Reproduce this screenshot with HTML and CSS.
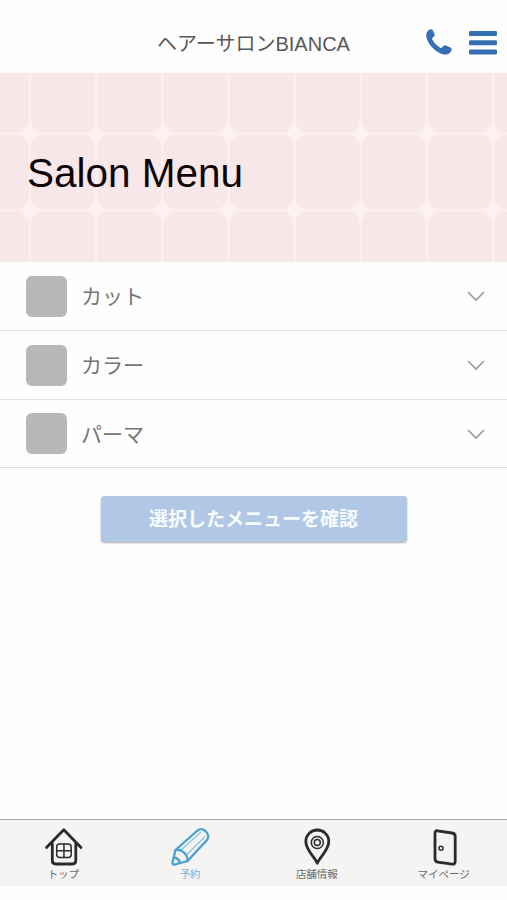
FILE: index.html
```html
<!DOCTYPE html>
<html lang="ja">
<head>
<meta charset="utf-8">
<meta name="viewport" content="width=device-width, initial-scale=1">
<title>ヘアーサロンBIANCA</title>
<link rel="stylesheet" href="styles.css">
</head>
<body>
<div class="app">
  <header class="header">
    <span class="header-title">ヘアーサロンBIANCA</span>
    <div class="header-actions">
      <svg class="phone" width="28" height="28" viewBox="0 0 28 28"><path d="M2.300 5.800C3.200 3.200 5.200 1.200 7.300 1.300c1 .1 1.400.8 1.900 1.800l1.300 3c.5 1.100.2 1.800-.6 2.500L8.300 10.100c-.4.4-.3.8 0 1.300 1.900 3.500 4.500 6.200 8 8.300.7.4 1.100.4 1.600-.1l1.500-1.700c.7-.7 1.400-.9 2.300-.5l4.700 2.200c1.300.6 1.500 1.200 1.200 2.400-.7 2.500-3 4.500-6 4.600C13.500 26.700 1.100 15 2.300 5.800z"/></svg>
      <svg class="burger" width="28" height="26" viewBox="0 0 28 26"><rect y="1" width="28" height="5" rx="1.200"/><rect y="10.200" width="28" height="5" rx="1.200"/><rect y="19.500" width="28" height="5" rx="1.200"/></svg>
    </div>
  </header>
  <section class="hero">
    <svg class="hero-pattern" width="507" height="189">
      <defs>
        <pattern id="tile" x="-3.200" y="22.500" width="66.200" height="76.300" patternUnits="userSpaceOnUse">
          <path class="tile-line" d="M33.100 0V76.300M0 38.150H66.200"/>
          <path class="tile-diamond" d="M33.100 27.600q4 6.500 10 10.550q-6 4.500-10 10.800q-4-6.300-10-10.800q6-4.050 10-10.550z"/>
        </pattern>
      </defs>
      <rect width="507" height="189" fill="url(#tile)"/>
    </svg>
    <h1 class="hero-title">Salon Menu</h1>
  </section>
  <main class="main">
    <ul class="menu">
      <li class="menu-item"><span class="thumb"></span><span class="menu-name">カット</span><svg class="chevron" width="18" height="11" viewBox="0 0 18 11"><path d="M1 1l8 8 8-8"/></svg></li>
      <li class="menu-item"><span class="thumb"></span><span class="menu-name">カラー</span><svg class="chevron" width="18" height="11" viewBox="0 0 18 11"><path d="M1 1l8 8 8-8"/></svg></li>
      <li class="menu-item"><span class="thumb"></span><span class="menu-name">パーマ</span><svg class="chevron" width="18" height="11" viewBox="0 0 18 11"><path d="M1 1l8 8 8-8"/></svg></li>
    </ul>
    <button class="confirm" type="button">選択したメニューを確認</button>
  </main>
  <nav class="tabs">
    <a class="tab">
      <svg class="tab-icon" width="40" height="40" viewBox="0 0 40 40"><path class="heavy" d="M3.500 20.500L20.800 2.800l17.200 17.700M9.300 16v17.500q0 3.500 3.500 3.500h16.500q3.500 0 3.500-3.500V16"/><rect class="fine" x="13.700" y="17" width="14.500" height="13.500" rx="3"/><path class="fine" d="M20.950 17v13.500M13.700 23.800h14.500"/></svg>
      <span>トップ</span>
    </a>
    <a class="tab tab-active">
      <svg class="tab-icon" width="40" height="40" viewBox="0 0 40 40"><path class="mid" d="M5.500 23L27.500 3.500q4-3 8.200.7 4.500 4.500 1.300 8.800L17.500 34 5 37.500q-2.800.4-2.500-2.500z"/><path class="mid" d="M5.500 23c6-1.500 12.500 4.500 12 11M4 30.500q5 .5 5.700 5.500"/><path class="light" d="M12 22.300L30.500 5.500M17 27.300L35 9.500"/></svg>
      <span>予約</span>
    </a>
    <a class="tab">
      <svg class="tab-icon" width="40" height="40" viewBox="0 0 40 40"><path class="heavy" d="M20.300 36.300C18 30.300 8.800 23.200 8.800 14.500a11.500 11.500 0 0 1 23 0c0 8.700-9.200 15.800-11.500 21.800z"/><circle class="fine" cx="20.300" cy="15.500" r="6"/><circle class="fine" cx="20.300" cy="15.500" r="3"/></svg>
      <span>店舗情報</span>
    </a>
    <a class="tab">
      <svg class="tab-icon" width="40" height="40" viewBox="0 0 40 40"><path class="heavy" d="M13.500 3.800l14.500 2.200q3.200.5 3.200 3.500v25q0 3-3 2.600l-14.500-2q-2.700-.4-2.700-3.300V6.300q0-2.900 2.500-2.500z"/><circle class="fine" cx="17" cy="21.200" r="2"/></svg>
      <span>マイページ</span>
    </a>
  </nav>
</div>
</body>
</html>
```
FILE: styles.css
```css
* { box-sizing: border-box; }

body {
  margin: 0;
  background: #fefefe;
  font-family: "Liberation Sans", "Noto Sans CJK JP", sans-serif;
}

.app {
  display: flex;
  flex-direction: column;
  height: 900px;
  padding-bottom: 14px;
}

.header {
  display: grid;
  grid-template-columns: 1fr auto 1fr;
  align-items: center;
  height: 73px;
  padding: 13px 10px 0;
}

.header-title {
  grid-column: 2;
  padding-top: 2px;
  color: #585858;
  font-size: 20px;
  line-height: 30px;
}

.header-actions {
  display: flex;
  align-items: center;
  justify-content: flex-end;
  gap: 17px;
  fill: #3570b4;
}

.phone { margin-bottom: 2px; }

.hero {
  position: relative;
  display: flex;
  align-items: center;
  height: 189px;
  padding: 10px 27px 0;
  background: #f8e7e8;
}

.hero-pattern {
  position: absolute;
  top: 0;
  left: 0;
}

.tile-line { fill: none; stroke: #fdf1f2; stroke-width: 2.2; }
.tile-diamond { fill: #fdf1f2; }

.hero-title {
  position: relative;
  margin: 0;
  color: #0c0507;
  font-size: 40.500px;
  font-weight: 400;
  line-height: 48px;
}

.main {
  display: flex;
  flex: 1;
  flex-direction: column;
}

.menu {
  margin: 0;
  padding: 0;
  list-style: none;
}

.menu-item {
  display: flex;
  align-items: center;
  height: 68.800px;
  padding: 1px 22px 0 26px;
  border-bottom: 1.500px solid #dedede;
}

.thumb {
  width: 41px;
  height: 41px;
  border-radius: 6px;
  background: #b8b8b8;
}

.menu-name {
  flex: 1;
  margin-left: 14px;
  padding-top: 2px;
  color: #757575;
  font-size: 21px;
  line-height: 30px;
}

.chevron {
  margin-top: 1px;
  fill: none;
  stroke: #999;
  stroke-width: 1.6;
}

.confirm {
  align-self: center;
  width: 306px;
  height: 46px;
  margin: 28px 0 0;
  padding: 1px 0 0;
  border: 0;
  border-radius: 4px;
  background: #b0c7e6;
  box-shadow: 0 1px 2px #aaa;
  color: #fafdff;
  font: 700 19px/28px "Liberation Sans", "Noto Sans CJK JP", sans-serif;
}

.tabs {
  display: grid;
  grid-template-columns: repeat(4, 1fr);
  height: 67px;
  border-top: 1px solid #aaa;
  background: #f5f4f3;
}

.tab {
  display: flex;
  flex-direction: column;
  align-items: center;
  padding-top: 7px;
  color: #6b6b6b;
  font-size: 10.500px;
  line-height: 15px;
}

.tab-active { color: #72b5dc; }

.tab-icon {
  fill: none;
  stroke: #2b2b2b;
  stroke-linecap: round;
  stroke-linejoin: round;
}

.tab-active .tab-icon { stroke: #479fd3; }

.heavy { stroke-width: 2.8; }
.mid { stroke-width: 2.3; }
.fine { stroke-width: 1.5; }
.light { stroke-width: 1.2; opacity: .6; }
```
